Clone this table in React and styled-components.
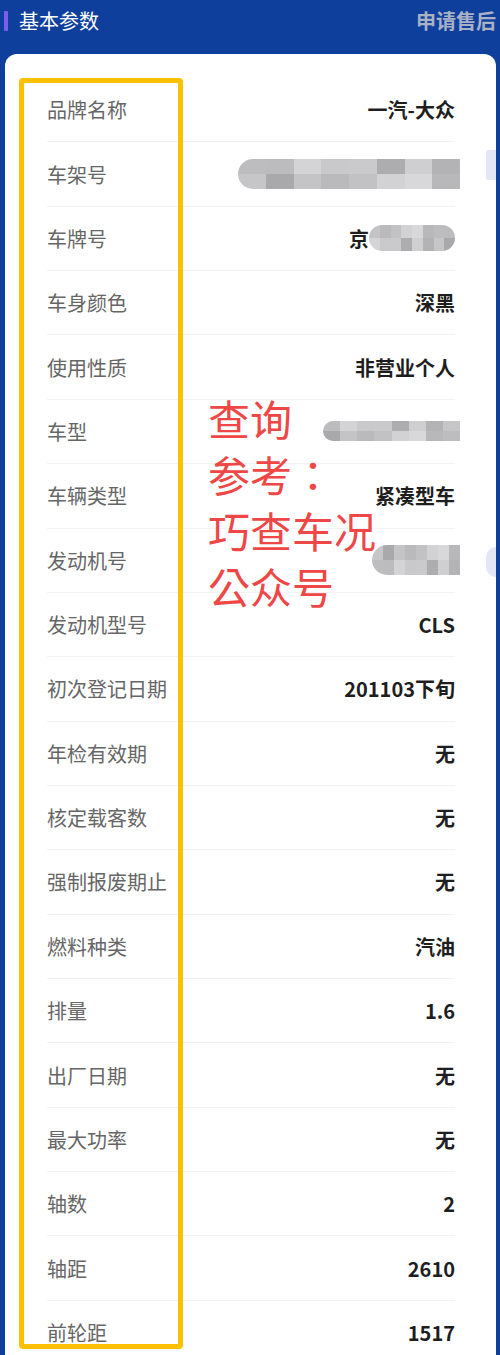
import React from "react";
import styled, { createGlobalStyle } from "styled-components";

const GlobalStyle = createGlobalStyle`
  html, body {
    margin: 0;
    padding: 0;
    background: #0e3f9d;
    font-family: "Noto Sans CJK SC", "Noto Sans", sans-serif;
  }
`;

const Page = styled.div`
  width: 500px;
  height: 1355px;
  background: #0e3f9d;
  overflow: hidden;
  position: relative;
`;

const Header = styled.div`
  height: 54px;
  display: flex;
  align-items: flex-start;
  justify-content: space-between;
  padding: 0 4px;
  box-sizing: border-box;
`;

const TitleWrap = styled.div`
  display: flex;
  align-items: center;
  height: 42px;
  gap: 11px;
`;

const Marker = styled.span`
  width: 4px;
  height: 20px;
  background: #7b5df2;
  border-radius: 1px;
`;

const Title = styled.span`
  color: #fff;
  font-size: 20px;
  line-height: 42px;
`;

const After = styled.span`
  color: #a9b1c4;
  font-size: 20px;
  font-weight: 700;
  line-height: 42px;
`;

const Card = styled.div`
  position: relative;
  margin-left: 5px;
  width: 491px;
  background: #fff;
  border-radius: 12px 12px 0 0;
  padding: 24px 41px 0 42px;
  box-sizing: border-box;
  height: 1301px;
`;

const Row = styled.div`
  height: 64.37px;
  display: flex;
  align-items: center;
  justify-content: space-between;
  border-bottom: 1px solid #f2f2f4;
  box-sizing: border-box;
`;

const Label = styled.span`
  color: #666;
  font-size: 20px;
`;

const Value = styled.span`
  color: #1e1e1e;
  font-size: 20px;
  font-weight: 700;
  display: flex;
  align-items: center;
`;

const Blur = styled.span`
  display: flex;
  height: ${(p) => p.h}px;
  width: ${(p) => p.w}px;
  margin-right: ${(p) => p.mr || 0}px;
  border-radius: ${(p) => p.h / 2}px ${(p) => (p.round ? p.h / 2 : 0)}px ${(p) => (p.round ? p.h / 2 : 0)}px ${(p) => p.h / 2}px;
  overflow: hidden;
  flex-wrap: wrap;
`;

const Cell = styled.span`
  width: 12.5%;
  height: 50%;
`;

const Highlight = styled.div`
  position: absolute;
  left: 14px;
  top: 24px;
  width: 164px;
  height: 1271px;
  border: 5px solid #fbc100;
  border-radius: 4px;
  box-sizing: border-box;
`;

const Watermark = styled.div`
  position: absolute;
  left: 203px;
  top: 336px;
  color: #ef4646;
  font-family: "Noto Sans CJK TC", "Noto Sans CJK SC", sans-serif;
  font-size: 42px;
  line-height: 56px;
  white-space: pre;
`;

const EdgeTab = styled.div`
  position: absolute;
  right: 0;
  top: ${(p) => p.top}px;
  width: 10px;
  height: ${(p) => p.h}px;
  background: #e3e7f5;
  border-radius: ${(p) => (p.round ? "15px 0 0 15px" : "2px 0 0 2px")};
`;

const grays = [
  "#c9c9cb", "#bdbdbf", "#d2d2d4", "#c4c4c6", "#b3b3b5", "#cacacc", "#bcbcbe", "#d8d8da",
  "#bababc", "#c6c6c8", "#adadaf", "#d4d4d6", "#b8b8ba", "#c2c2c4", "#a9a9ab", "#cfcfd1",
];

const Pixel = ({ w, h, mr, round, seed = 0 }) => (
  <Blur w={w} h={h} mr={mr} round={round}>
    {grays.map((_, i) => (
      <Cell key={i} style={{ background: grays[(i * 5 + seed) % grays.length] }} />
    ))}
  </Blur>
);

const rows = [
  ["品牌名称", "一汽-大众"],
  ["车架号", <Pixel w={222} h={30} mr={-5} seed={1} />],
  ["车牌号", <>京<Pixel w={86} h={26} round seed={3} /></>],
  ["车身颜色", "深黑"],
  ["使用性质", "非营业个人"],
  ["车型", <Pixel w={137} h={20} mr={-5} seed={6} />],
  ["车辆类型", "紧凑型车"],
  ["发动机号", <Pixel w={88} h={30} mr={-5} seed={9} />],
  ["发动机型号", "CLS"],
  ["初次登记日期", "201103下旬"],
  ["年检有效期", "无"],
  ["核定载客数", "无"],
  ["强制报废期止", "无"],
  ["燃料种类", "汽油"],
  ["排量", "1.6"],
  ["出厂日期", "无"],
  ["最大功率", "无"],
  ["轴数", "2"],
  ["轴距", "2610"],
  ["前轮距", "1517"],
];

export default function App() {
  return (
    <Page>
      <GlobalStyle />
      <Header>
        <TitleWrap>
          <Marker />
          <Title>基本参数</Title>
        </TitleWrap>
        <After>申请售后</After>
      </Header>
      <Card>
        {rows.map(([label, value]) => (
          <Row key={label}>
            <Label>{label}</Label>
            <Value>{value}</Value>
          </Row>
        ))}
        <Highlight />
        <Watermark>{"查询\n参考：\n巧查车况\n公众号"}</Watermark>
        <EdgeTab top={96} h={30} />
        <EdgeTab top={493} h={30} round />
      </Card>
    </Page>
  );
}
